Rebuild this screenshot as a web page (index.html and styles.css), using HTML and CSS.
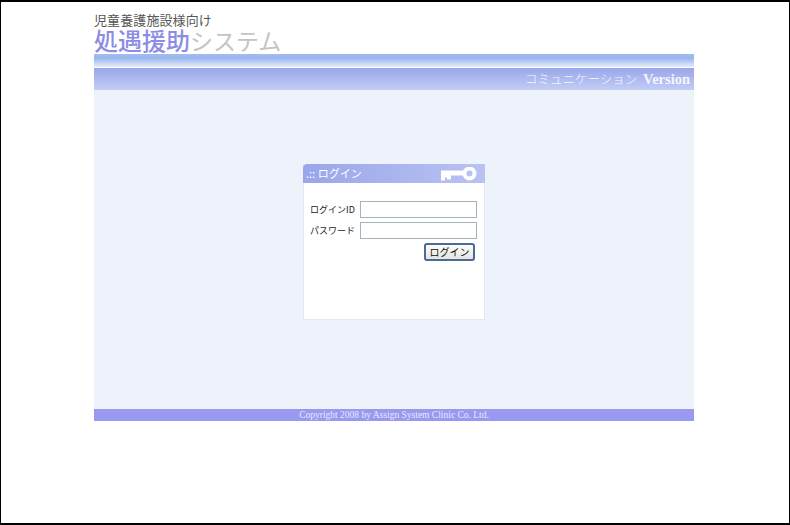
FILE: index.html
```html
<!DOCTYPE html>
<html lang="ja">
<head>
<meta charset="utf-8">
<title>処遇援助システム</title>
<link rel="stylesheet" href="styles.css">
</head>
<body>
<div class="frame">
  <div class="page">
    <header class="brand">
      <div class="brand-sub">児童養護施設様向け</div>
      <div class="brand-title"><span class="brand-main">処遇援助</span><span class="brand-rest">システム</span></div>
    </header>
    <div class="band-top"></div>
    <div class="band-main"><span class="edition">コミュニケーション <b class="edition-v">Version</b></span></div>
    <main class="content">
      <section class="login">
        <div class="login-head">
          <span class="login-title">.:: ログイン</span>
          <svg class="key" width="36" height="14" viewBox="0 0 36 14">
            <path d="M0 3.500h25v5H10v4H6v-2H4v3H0z" fill="#fff"/>
            <circle cx="28.500" cy="6.500" r="5" fill="none" stroke="#fff" stroke-width="4"/>
          </svg>
        </div>
        <form class="login-body">
          <div class="row"><label class="lbl">ログインID</label><input class="field" type="text"></div>
          <div class="row"><label class="lbl">パスワード</label><input class="field" type="password"></div>
          <div class="actions"><button class="btn" type="button">ログイン</button></div>
        </form>
      </section>
    </main>
    <footer class="foot">Copyright 2008 by Assign System Clinic Co. Ltd.</footer>
  </div>
</div>
</body>
</html>
```
FILE: styles.css
```css
html, body { margin: 0; padding: 0; background: #fff; }
.frame {
  box-sizing: border-box;
  width: 790px;
  height: 525px;
  border: solid #000;
  border-width: 2px 1px 2px 1px;
  overflow: hidden;
  padding-left: 93px;
  font-family: "Noto Sans CJK JP", "Liberation Sans", sans-serif;
}
.page { width: 600px; }
.brand { height: 52px; display: flex; flex-direction: column; padding-top: 11px; box-sizing: border-box; }
.brand-sub { font-size: 13px; line-height: 14px; letter-spacing: .1px; color: #555; }
.brand-title { font-size: 24px; line-height: 25px; white-space: nowrap; }
.brand-main { color: #8c8ce6; font-weight: 500; }
.brand-rest { color: #c4c4c4; font-size: 23px; }
.band-top { height: 13px; background: linear-gradient(#a4bdf0, #98b4ee 30%, #e4edfb); border-bottom: 1px solid #fff; }
.band-main {
  height: 22px;
  background: linear-gradient(#9aa6ea, #c3cdf5);
  display: flex;
  justify-content: flex-end;
  align-items: center;
  padding-right: 4px;
}
.edition { font-size: 12.500px; line-height: 22px; color: #f4f6ff; font-weight: 300; }
.edition-v { font-family: "Liberation Serif", serif; font-size: 14.500px; font-weight: 700; margin-left: 3px; }
.content {
  height: 319px;
  box-sizing: border-box;
  background: #eef2fb;
  padding: 74px 0 0 209px;
}
.login { width: 182px; height: 156px; background: #fff; box-sizing: border-box; border: 1px solid #e2e8f6; border-top: 0; }
.login-head {
  height: 19px;
  margin: 0 -1px;
  background: linear-gradient(90deg, #9aa6ea, #b9c3f2);
  border-top-left-radius: 4px;
  display: flex;
  justify-content: space-between;
  align-items: center;
  padding: 0 8px 0 3px;
}
.login-title { color: #fff; font-size: 11px; line-height: 19px; }
.key { display: block; }
.login-body { padding: 18px 7px 0 6px; }
.row { display: flex; align-items: center; justify-content: space-between; height: 17px; margin-bottom: 4px; }
.lbl { font-size: 9px; line-height: 15px; color: #222; white-space: nowrap; width: 50px; }
.field {
  box-sizing: border-box;
  width: 117px;
  height: 16.500px;
  padding: 0;
  margin: 0;
  border: 1px solid #a5b3bb;
  background: #fff;
}
.actions { display: flex; justify-content: flex-end; padding: 0 2px 0 0; }
.btn {
  box-sizing: border-box;
  width: 51px;
  height: 18px;
  padding: 0;
  border: 2px solid #4a6a9c;
  border-radius: 3px;
  background: linear-gradient(#fdfdfb, #e6e6de);
  font-family: inherit;
  font-size: 10px;
  line-height: 14px;
  color: #111;
}
.foot {
  height: 12px;
  background: #9999f2;
  color: #e6e8fc;
  font-family: "Liberation Serif", serif;
  font-size: 9.500px;
  line-height: 12px;
  text-align: center;
}
```
